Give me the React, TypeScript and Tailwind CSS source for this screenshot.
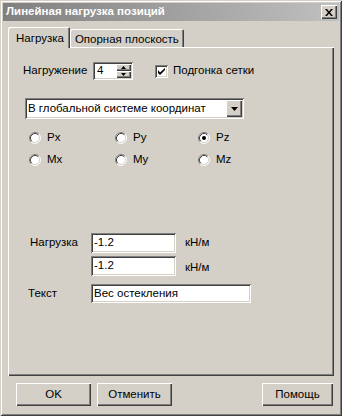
import React from 'react';

const raised =
  'shadow-[inset_1px_1px_#ffffff,inset_-1px_-1px_#404040,inset_-2px_-2px_#808080]';
const sunken =
  'shadow-[inset_1px_1px_#808080,inset_-1px_-1px_#ffffff,inset_2px_2px_#404040,inset_-2px_-2px_#d4d0c8]';

const Radio: React.FC<{ label: string; checked?: boolean }> = ({ label, checked }) => (
  <div className="flex items-center h-[16px]">
    <svg width="12" height="12" viewBox="0 0 12 12">
      <circle cx="6" cy="6" r="5" fill="#ffffff" />
      <path d="M2.11 9.89 A5.5 5.5 0 0 1 9.89 2.11" stroke="#808080" fill="none" />
      <path d="M9.89 2.11 A5.5 5.5 0 0 1 2.11 9.89" stroke="#ffffff" fill="none" />
      <path d="M2.82 9.18 A4.5 4.5 0 0 1 9.18 2.82" stroke="#404040" fill="none" />
      <path d="M9.18 2.82 A4.5 4.5 0 0 1 2.82 9.18" stroke="#d4d0c8" fill="none" />
      {checked && <circle cx="6" cy="6" r="2" fill="#000000" />}
    </svg>
    <span className="ml-[6px]">{label}</span>
  </div>
);

const WinButton: React.FC<{ label: string; width: string }> = ({ label, width }) => (
  <div className={`${width} h-[23px] flex items-center justify-center bg-[#d4d0c8] ${raised}`}>
    {label}
  </div>
);

export default function App() {
  return (
    <div className="w-[342px] h-[416px] bg-[#d4d0c8] p-[3px] flex flex-col text-[11.5px] text-black font-['Liberation_Sans',Arial,sans-serif] shadow-[inset_1px_1px_#d4d0c8,inset_-1px_-1px_#404040,inset_2px_2px_#ffffff,inset_-2px_-2px_#808080]">
      {/* title bar */}
      <div className="h-[18px] flex items-center justify-between bg-gradient-to-r from-[#808080] to-[#c0c0c0] pl-[3px] pr-[2px]">
        <span className="text-white font-bold">Линейная нагрузка позиций</span>
        <div className={`w-[16px] h-[14px] flex items-center justify-center bg-[#d4d0c8] ${raised}`}>
          <svg width="8" height="7" viewBox="0 0 8 7">
            <path d="M0 0 L2 0 L4 2.5 L6 0 L8 0 L5 3.5 L8 7 L6 7 L4 4.5 L2 7 L0 7 L3 3.5 Z" fill="#000000" />
          </svg>
        </div>
      </div>

      <div className="mt-[6px] px-[5px] flex flex-col">
        {/* tabs */}
        <div className="flex items-end h-[20px]">
          <div className="relative z-10 h-[21px] -mb-[1px] pl-[8px] pr-[6px] flex items-start pt-[3px] bg-[#d4d0c8] rounded-t-[2px] shadow-[inset_1px_1px_#ffffff,inset_-1px_0_#404040,inset_-2px_0_#808080]">
            Нагрузка
          </div>
          <div className="h-[18px] pl-[5px] pr-[5px] flex items-start pt-[2px] rounded-t-[2px] shadow-[inset_1px_1px_#ffffff,inset_-1px_0_#404040,inset_-2px_0_#808080]">
            Опорная плоскость
          </div>
        </div>

        {/* panel */}
        <div className={`h-[329px] flex flex-col bg-[#d4d0c8] ${raised}`}>
          <div className="mt-[15px] ml-[15px] flex items-center h-[18px]">
            <span className="w-[70px]">Нагружение</span>
            <div className={`w-[40px] h-[18px] bg-white flex items-center justify-between pl-[4px] pr-[2px] ${sunken}`}>
              <span>4</span>
              <div className="flex flex-col">
                <div className={`w-[15px] h-[7px] bg-[#d4d0c8] flex items-center justify-center ${raised}`}>
                  <svg width="5" height="3" viewBox="0 0 5 3">
                    <path d="M0 3 L2.5 0 L5 3 Z" fill="#000000" />
                  </svg>
                </div>
                <div className={`w-[15px] h-[7px] bg-[#d4d0c8] flex items-center justify-center ${raised}`}>
                  <svg width="5" height="3" viewBox="0 0 5 3">
                    <path d="M0 0 L5 0 L2.5 3 Z" fill="#000000" />
                  </svg>
                </div>
              </div>
            </div>
            <div className={`ml-[22px] w-[13px] h-[13px] bg-white flex items-center justify-center ${sunken}`}>
              <svg width="7" height="7" viewBox="0 0 7 7">
                <path d="M0 2 L0 5 L2 7 L7 2 L7 0 L2 4.5 Z" fill="#000000" />
              </svg>
            </div>
            <span className="ml-[5px]">Подгонка сетки</span>
          </div>

          <div className={`mt-[18px] ml-[17px] w-[219px] h-[21px] bg-white flex items-center justify-between pl-[3px] pr-[2px] ${sunken}`}>
            <span>В глобальной системе координат</span>
            <div className={`w-[16px] h-[17px] bg-[#d4d0c8] flex items-center justify-center ${raised}`}>
              <svg width="7" height="4" viewBox="0 0 7 4">
                <path d="M0 0 L7 0 L3.5 4 Z" fill="#000000" />
              </svg>
            </div>
          </div>

          <div className="mt-[11px] ml-[21px] grid grid-cols-[86px_83px_80px] gap-y-[6px]">
            <Radio label="Px" />
            <Radio label="Py" />
            <Radio label="Pz" checked />
            <Radio label="Mx" />
            <Radio label="My" />
            <Radio label="Mz" />
          </div>

          <div className="mt-[65px] ml-[22px] flex">
            <span className="w-[61px] h-[20px] flex items-center">Нагрузка</span>
            <div className="flex flex-col gap-[2px]">
              <div className="flex items-center">
                <div className={`w-[85px] h-[20px] bg-white flex items-center pl-[3px] ${sunken}`}>-1.2</div>
                <span className="ml-[9px]">кН/м</span>
              </div>
              <div className="flex items-center">
                <div className={`w-[85px] h-[20px] bg-white flex items-center pl-[3px] ${sunken}`}>-1.2</div>
                <span className="ml-[9px] mt-[4px]">кН/м</span>
              </div>
            </div>
          </div>

          <div className="mt-[8px] ml-[20px] flex items-center">
            <span className="w-[63px]">Текст</span>
            <div className={`w-[160px] h-[19px] bg-white flex items-center pl-[3px] ${sunken}`}>Вес остекления</div>
          </div>
        </div>

        {/* buttons */}
        <div className="mt-[7px] pl-[8px] pr-[1px] flex items-center">
          <WinButton label="OK" width="w-[75px]" />
          <div className="ml-[6px]">
            <WinButton label="Отменить" width="w-[75px]" />
          </div>
          <div className="ml-auto">
            <WinButton label="Помощь" width="w-[71px]" />
          </div>
        </div>
      </div>
    </div>
  );
}
